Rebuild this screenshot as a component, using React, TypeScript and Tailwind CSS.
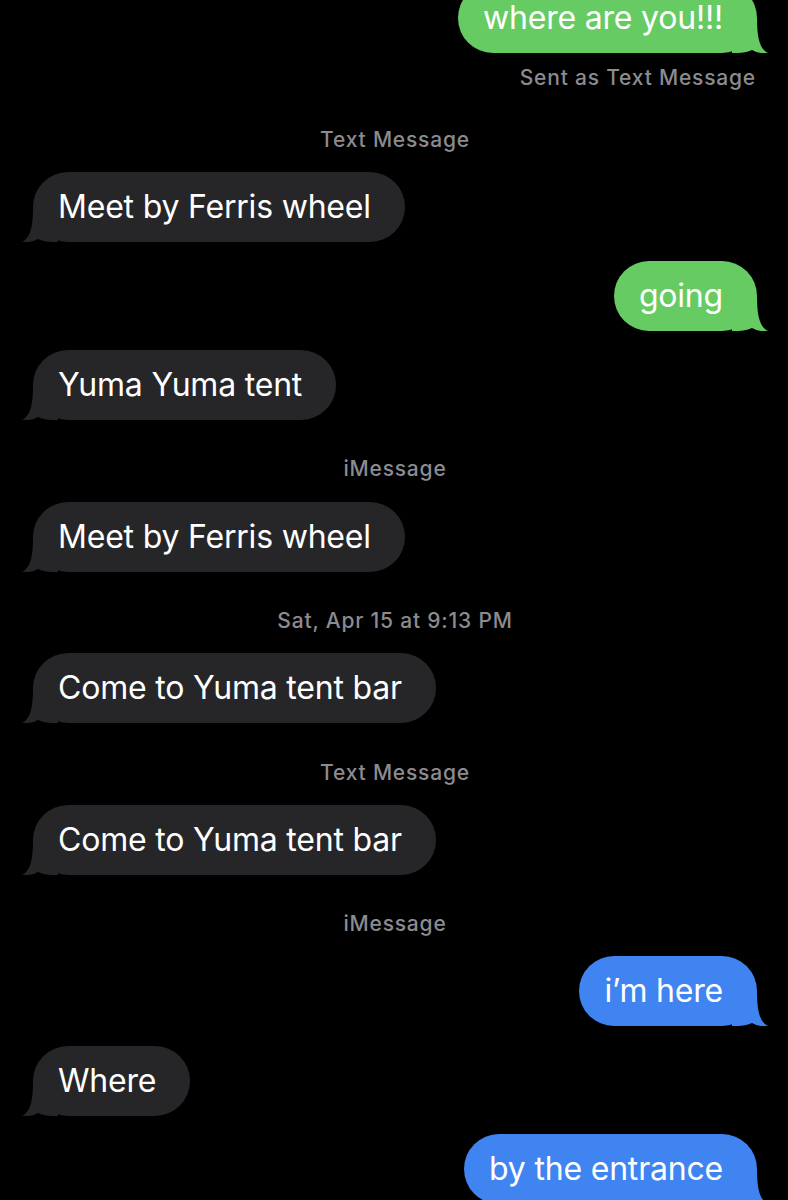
import React from "react";

type Msg =
  | { kind: "label"; text: string; mt: number; align?: "center" | "right" }
  | { kind: "bubble"; text: string; mt: number; side: "left" | "right"; color: "green" | "blue" | "gray" };

const thread: Msg[] = [
  { kind: "bubble", text: "where are you!!!", mt: -17, side: "right", color: "green" },
  { kind: "label", text: "Sent as Text Message", mt: 13, align: "right" },
  { kind: "label", text: "Text Message", mt: 38 },
  { kind: "bubble", text: "Meet by Ferris wheel", mt: 20, side: "left", color: "gray" },
  { kind: "bubble", text: "going", mt: 19, side: "right", color: "green" },
  { kind: "bubble", text: "Yuma Yuma tent", mt: 19, side: "left", color: "gray" },
  { kind: "label", text: "iMessage", mt: 37 },
  { kind: "bubble", text: "Meet by Ferris wheel", mt: 21, side: "left", color: "gray" },
  { kind: "label", text: "Sat, Apr 15 at 9:13 PM", mt: 37 },
  { kind: "bubble", text: "Come to Yuma tent bar", mt: 20, side: "left", color: "gray" },
  { kind: "label", text: "Text Message", mt: 38 },
  { kind: "bubble", text: "Come to Yuma tent bar", mt: 20, side: "left", color: "gray" },
  { kind: "label", text: "iMessage", mt: 37 },
  { kind: "bubble", text: "i’m here", mt: 20, side: "right", color: "blue" },
  { kind: "bubble", text: "Where", mt: 20, side: "left", color: "gray" },
  { kind: "bubble", text: "by the entrance", mt: 18, side: "right", color: "blue" },
];

const fills = {
  green: { bg: "bg-[#66cb63]", hex: "#66cb63" },
  blue: { bg: "bg-[#3f84f1]", hex: "#3f84f1" },
  gray: { bg: "bg-[#262629]", hex: "#262629" },
};

function Tail({ side, color }: { side: "left" | "right"; color: string }) {
  return (
    <svg
      width="36"
      height="35"
      viewBox="0 0 36 35"
      className={
        side === "right"
          ? "absolute bottom-0 right-[-11px]"
          : "absolute bottom-0 left-[-11px] -scale-x-100"
      }
    >
      <path
        d="M0 35 L0 0 L25 0 C25 21 28 31 36 35 C31 35.8 25 34.8 20 32 C15 34.5 9 35 0 35 Z"
        fill={color}
      />
    </svg>
  );
}

function Bubble({ text, side, color }: { text: string; side: "left" | "right"; color: "green" | "blue" | "gray" }) {
  return (
    <div className={side === "right" ? "flex justify-end" : "flex justify-start"}>
      <div
        className={`relative flex h-[70px] items-center rounded-[35px] pl-[25px] pr-[34px] text-[32px] text-white ${fills[color].bg}`}
      >
        <Tail side={side} color={fills[color].hex} />
        <span className="relative tracking-[-0.2px]">{text}</span>
      </div>
    </div>
  );
}

export default function App() {
  return (
    <div
      className="h-[1200px] w-[788px] overflow-hidden bg-black pl-[33px] pr-[31px]"
      style={{ fontFamily: "Inter, 'Noto Sans', sans-serif" }}
    >
      {thread.map((m, i) =>
        m.kind === "label" ? (
          <div
            key={i}
            style={{ marginTop: m.mt }}
            className={`h-[24px] text-[21px] font-medium leading-[24px] tracking-[0.8px] text-[#8b8b90] ${
              m.align === "right" ? "pr-[1px] text-right" : "text-center"
            }`}
          >
            {m.text}
          </div>
        ) : (
          <div key={i} style={{ marginTop: m.mt }}>
            <Bubble text={m.text} side={m.side} color={m.color} />
          </div>
        )
      )}
    </div>
  );
}
